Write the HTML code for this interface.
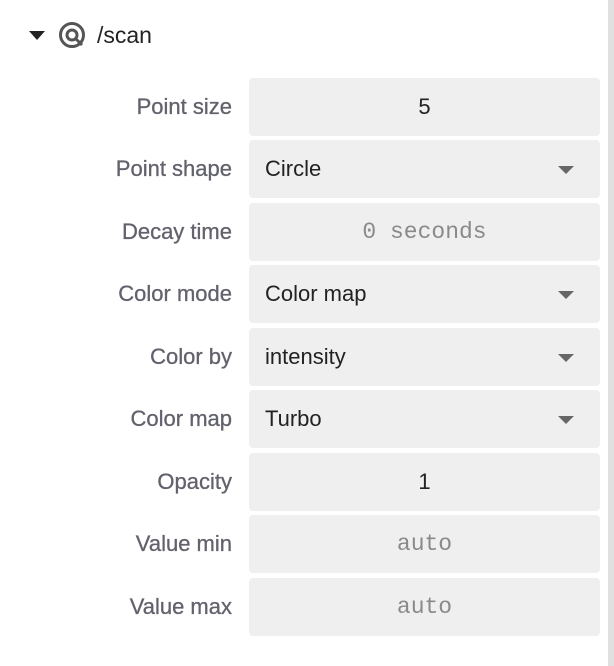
<!DOCTYPE html>
<html><head><style>
body{margin:0;width:614px;height:666px;background:#fff;font-family:"Liberation Sans",sans-serif;position:relative;overflow:hidden}
.sb{position:absolute;left:608px;top:0;width:6px;height:666px;background:#e0e0e0}
.hdr{position:absolute;top:20px;left:28px;height:30px;display:flex;align-items:center;font-size:23px;color:#222}
.row{position:absolute;left:0;width:600px;height:58px}
.lab{position:absolute;right:368px;top:0;line-height:58px;font-size:22px;color:#62626c;white-space:nowrap;-webkit-text-stroke:0.3px #62626c}
.box{position:absolute;left:249px;width:351px;height:58px;top:0;background:#efefef;border-radius:4px;font-size:22px;color:#222;line-height:58px}
.c{text-align:center}
.m{font-family:"Liberation Mono",monospace;font-size:23px;color:#8a8a8a;text-align:center}
.s{padding-left:16px;box-sizing:border-box}
.s:after{content:"";position:absolute;right:26px;top:26px;border-left:8px solid transparent;border-right:8px solid transparent;border-top:8px solid #666}
</style></head><body>
<div class="sb"></div>
<div class="hdr"><svg width="18" height="12" style="margin-right:12px"><path d="M1 2 L17 2 L9 11 Z" fill="#222"/></svg>
<svg width="28" height="28" viewBox="0 0 28 28" style="margin-right:11px"><circle cx="14" cy="14" r="11.5" fill="none" stroke="#555" stroke-width="3"/><circle cx="14" cy="14" r="5" fill="none" stroke="#555" stroke-width="3"/><path d="M17 17 L24 24" stroke="#555" stroke-width="3"/></svg>/scan</div>
<div class="row" style="top:78px"><div class="lab">Point size</div><div class="box c">5</div></div>
<div class="row" style="top:140px"><div class="lab">Point shape</div><div class="box s">Circle</div></div>
<div class="row" style="top:203px"><div class="lab">Decay time</div><div class="box m">0 seconds</div></div>
<div class="row" style="top:265px"><div class="lab">Color mode</div><div class="box s">Color map</div></div>
<div class="row" style="top:328px"><div class="lab">Color by</div><div class="box s">intensity</div></div>
<div class="row" style="top:390px"><div class="lab">Color map</div><div class="box s">Turbo</div></div>
<div class="row" style="top:453px"><div class="lab">Opacity</div><div class="box c">1</div></div>
<div class="row" style="top:515px"><div class="lab">Value min</div><div class="box m">auto</div></div>
<div class="row" style="top:578px"><div class="lab">Value max</div><div class="box m">auto</div></div>
</body></html>
